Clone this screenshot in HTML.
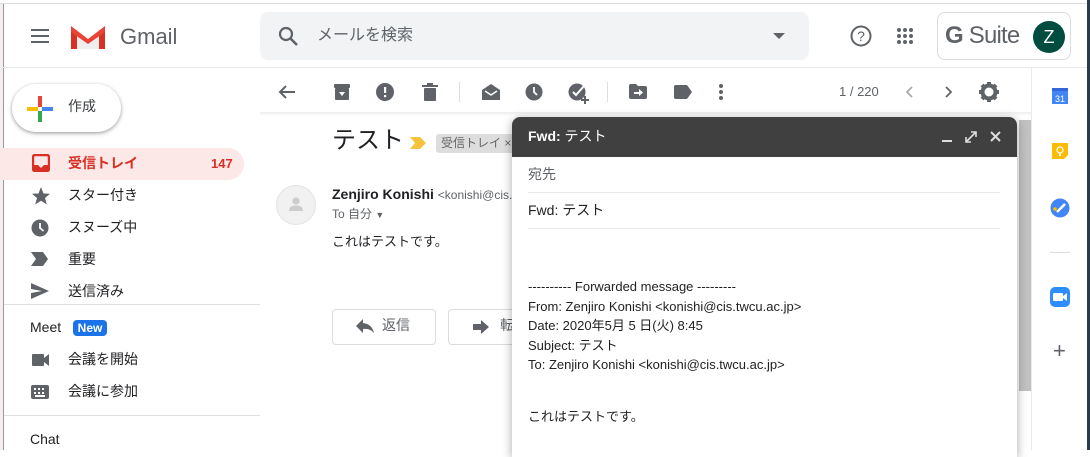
<!DOCTYPE html>
<html><head><meta charset="utf-8"><style>
*{box-sizing:border-box;margin:0;padding:0}
body{width:1090px;height:450px;overflow:hidden;background:#fff;font-family:"Liberation Sans","Noto Sans CJK JP",sans-serif;color:#202124;position:relative;line-height:1.2}
.a{position:absolute;white-space:nowrap}
.ic{position:absolute;fill:#5f6368}
.nav{position:absolute;left:68px;font-size:14px;color:#202124;white-space:nowrap}
</style></head><body>
<div class="a" style="left:0;top:0;width:1090px;height:4px;background:#fff;border-bottom:1px solid #ddd"></div>
<div class="a" style="left:0;top:4px;width:4px;height:446px;background:#f4eef0;border-right:1px solid #999"></div>
<div class="a" style="left:1087px;top:0;width:3px;height:450px;background:#2b3a4a"></div>
<!-- header -->
<svg class="ic" style="left:30px;top:27px" width="20" height="18"><rect x="1" y="2" width="18" height="2"/><rect x="1" y="8" width="18" height="2"/><rect x="1" y="14" width="18" height="2"/></svg>
<svg class="a" style="left:69px;top:23px" width="38" height="27"><path d="M2 4 L19 16 L36 4 L36 26 L2 26Z" fill="#eee"/><path d="M2 4 L2 26 L8 26 L8 10 Z" fill="#d93025"/><path d="M36 4 L36 26 L30 26 L30 10Z" fill="#d93025"/><path d="M2 3 L19 16 L36 3 L36 9 L19 21 L2 9Z" fill="#ea4335"/></svg>
<div class="a" style="left:120px;top:24px;font-size:22px;color:#5f6368">Gmail</div>
<div class="a" style="left:260px;top:12px;width:549px;height:48px;background:#f1f3f4;border-radius:8px"></div>
<svg class="ic" style="left:278px;top:26px" width="22" height="22"><circle cx="8" cy="8" r="6" fill="none" stroke="#5f6368" stroke-width="2.2"/><path d="M12 12 L19 19" stroke="#5f6368" stroke-width="2.6"/></svg>
<div class="a" style="left:317px;top:26px;font-size:16px;color:#5f6368">メールを検索</div>
<svg class="ic" style="left:773px;top:33px" width="12" height="8"><path d="M0 0 L12 0 L6 6Z"/></svg>
<svg class="a" style="left:849px;top:24px" width="24" height="24"><circle cx="12" cy="12" r="9.5" fill="none" stroke="#5f6368" stroke-width="2"/><text x="12" y="17" font-size="14" text-anchor="middle" fill="#5f6368" font-family="Liberation Sans">?</text></svg>
<svg class="ic" style="left:896px;top:27px" width="18" height="18"><g><circle cx="3" cy="3" r="2"/><circle cx="9" cy="3" r="2"/><circle cx="15" cy="3" r="2"/><circle cx="3" cy="9" r="2"/><circle cx="9" cy="9" r="2"/><circle cx="15" cy="9" r="2"/><circle cx="3" cy="15" r="2"/><circle cx="9" cy="15" r="2"/><circle cx="15" cy="15" r="2"/></g></svg>
<div class="a" style="left:937px;top:12px;width:134px;height:48px;border:1px solid #dadce0;border-radius:8px"></div>
<div class="a" style="left:945px;top:22px;font-size:24px;color:#5f6368;letter-spacing:-0.8px"><b>G</b> Suite</div>
<div class="a" style="left:1033px;top:21px;width:32px;height:32px;border-radius:50%;background:#004d40;color:#fff;font-size:18px;text-align:center;line-height:32px">Z</div>
<div class="a" style="left:0;top:67px;width:1087px;height:1px;background:#e8eaed"></div>
<!-- sidebar -->
<div class="a" style="left:12px;top:84px;width:109px;height:48px;border-radius:24px;box-shadow:0 1px 3px rgba(0,0,0,.3),0 2px 6px rgba(0,0,0,.12);background:#fff"></div>
<svg class="a" style="left:27px;top:96px" width="26" height="26"><rect x="11" y="0" width="4" height="11" fill="#ea4335"/><rect x="15" y="11" width="11" height="4" fill="#4285f4"/><rect x="11" y="15" width="4" height="11" fill="#34a853"/><rect x="0" y="11" width="11" height="4" fill="#fbbc04"/></svg>
<div class="a" style="left:68px;top:98px;font-size:14px;color:#3c4043">作成</div>
<div class="a" style="left:0;top:148px;width:244px;height:32px;background:#fce8e6;border-radius:0 16px 16px 0"></div>
<svg class="a" style="left:32px;top:154px" width="18" height="18"><rect x="1" y="1" width="16" height="16" rx="2" fill="none" stroke="#d93025" stroke-width="2.4"/><path d="M1 11 L6 11 L9 14 L12 11 L17 11 L17 17 L1 17Z" fill="#d93025"/></svg>
<div class="nav" style="top:155px;color:#d93025;font-weight:bold">受信トレイ</div>
<div class="a" style="left:211px;top:156px;font-size:13px;color:#d93025;font-weight:bold">147</div>
<svg class="ic" style="left:31px;top:186px" width="20" height="20"><path d="M10 1 L12.5 7.5 L19 7.8 L14 12 L15.8 18.5 L10 14.8 L4.2 18.5 L6 12 L1 7.8 L7.5 7.5Z"/></svg>
<div class="nav" style="top:187px">スター付き</div>
<svg class="ic" style="left:31px;top:219px" width="18" height="18"><circle cx="9" cy="9" r="8.5"/><path d="M9 4 L9 9 L12.5 12" stroke="#fff" stroke-width="1.8" fill="none"/></svg>
<div class="nav" style="top:219px">スヌーズ中</div>
<svg class="ic" style="left:31px;top:252px" width="18" height="14"><path d="M0 0 L12 0 L17 7 L12 14 L0 14 L5 7Z"/></svg>
<div class="nav" style="top:251px">重要</div>
<svg class="ic" style="left:31px;top:283px" width="18" height="16"><path d="M0 0 L18 8 L0 16 L0 10 L11 8 L0 6Z"/></svg>
<div class="nav" style="top:283px">送信済み</div>
<div class="a" style="left:4px;top:304px;width:256px;height:1px;background:#e0e0e0"></div>
<div class="a" style="left:30px;top:319px;font-size:14px;color:#202124">Meet</div>
<div class="a" style="left:73px;top:320px;width:34px;height:16px;background:#1a73e8;border-radius:4px;color:#fff;font-size:12px;font-weight:bold;text-align:center;line-height:16px">New</div>
<svg class="ic" style="left:32px;top:354px" width="18" height="12"><rect x="0" y="0" width="12" height="12" rx="1"/><path d="M12 4 L17 0 L17 12 L12 8Z"/></svg>
<div class="nav" style="top:351px">会議を開始</div>
<svg class="ic" style="left:31px;top:385px" width="18" height="14"><rect x="0" y="0" width="18" height="14" rx="2"/><g fill="#fff"><rect x="3" y="3" width="2" height="2"/><rect x="7" y="3" width="2" height="2"/><rect x="11" y="3" width="2" height="2"/><rect x="3" y="7" width="2" height="2"/><rect x="7" y="7" width="2" height="2"/><rect x="11" y="7" width="2" height="2"/><rect x="4" y="10" width="10" height="2"/></g></svg>
<div class="nav" style="top:383px">会議に参加</div>
<div class="a" style="left:4px;top:415px;width:256px;height:1px;background:#e0e0e0"></div>
<div class="a" style="left:30px;top:431px;font-size:14px">Chat</div>
<!-- toolbar -->
<svg class="a" style="left:278px;top:84px" width="18" height="16"><path d="M17 8 L2 8 M8 2 L2 8 L8 14" stroke="#5f6368" stroke-width="2" fill="none"/></svg>
<svg class="ic" style="left:333px;top:83px" width="18" height="18"><rect x="1" y="1" width="16" height="4" rx="1"/><rect x="2" y="5" width="14" height="12" rx="1"/><path d="M6 9 L12 9 L9 13Z" fill="#fff"/></svg>
<svg class="ic" style="left:376px;top:83px" width="18" height="18"><circle cx="9" cy="9" r="9"/><rect x="8" y="4" width="2.2" height="6" fill="#fff"/><rect x="8" y="12" width="2.2" height="2.2" fill="#fff"/></svg>
<svg class="ic" style="left:422px;top:83px" width="16" height="18"><rect x="0" y="2" width="16" height="2"/><rect x="5" y="0" width="6" height="2"/><rect x="2" y="5" width="12" height="13" rx="1"/></svg>
<div class="a" style="left:459px;top:82px;width:1px;height:20px;background:#ddd"></div>
<svg class="ic" style="left:481px;top:83px" width="20" height="18"><path d="M1 7 L10 1 L19 7 L19 17 L1 17Z"/><path d="M4 8 L10 12 L16 8" stroke="#fff" stroke-width="1.5" fill="none"/></svg>
<svg class="ic" style="left:525px;top:83px" width="18" height="18"><circle cx="9" cy="9" r="8.5"/><path d="M9 4 L9 9 L12 12" stroke="#fff" stroke-width="1.8" fill="none"/></svg>
<svg class="ic" style="left:568px;top:82px" width="22" height="22"><circle cx="9" cy="10" r="8.5"/><path d="M5 10 L8 13 L16 4" stroke="#fff" stroke-width="2" fill="none"/><path d="M17 14 L17 22 M13 18 L21 18" stroke="#5f6368" stroke-width="2"/></svg>
<div class="a" style="left:607px;top:82px;width:1px;height:20px;background:#ddd"></div>
<svg class="ic" style="left:629px;top:84px" width="18" height="15"><path d="M0 2 Q0 0 2 0 L7 0 L9 2 L16 2 Q18 2 18 4 L18 13 Q18 15 16 15 L2 15 Q0 15 0 13Z"/><path d="M5 8 L10 8 L10 5 L14 8.5 L10 12 L10 10 L5 10Z" fill="#fff"/></svg>
<svg class="ic" style="left:674px;top:85px" width="18" height="14"><path d="M2 0 L13 0 L18 7 L13 14 L2 14 Q0 14 0 12 L0 2 Q0 0 2 0Z"/></svg>
<svg class="ic" style="left:719px;top:84px" width="4" height="16"><circle cx="2" cy="2" r="2"/><circle cx="2" cy="8" r="2"/><circle cx="2" cy="14" r="2"/></svg>
<div class="a" style="left:839px;top:84px;font-size:13px;color:#5f6368">1 / 220</div>
<svg class="a" style="left:905px;top:86px" width="8" height="12"><path d="M7 1 L2 6 L7 11" stroke="#aaa" stroke-width="1.8" fill="none"/></svg>
<svg class="a" style="left:945px;top:86px" width="8" height="12"><path d="M1 1 L6 6 L1 11" stroke="#5f6368" stroke-width="1.8" fill="none"/></svg>
<svg class="a" style="left:979px;top:82px" width="20" height="20"><circle cx="10" cy="10" r="6.5" fill="none" stroke="#5f6368" stroke-width="4"/><g stroke="#5f6368" stroke-width="4"><path d="M10 0 V20 M0 10 H20 M3 3 L17 17 M17 3 L3 17" stroke-dasharray="3 14"/></g><circle cx="10" cy="10" r="2.6" fill="#fff"/></svg>
<div class="a" style="left:260px;top:112px;width:771px;height:4px;background:linear-gradient(#eee,#fff)"></div>
<!-- message -->
<div class="a" style="left:332px;top:127px;font-size:24px;color:#202124">テスト</div>
<svg class="a" style="left:410px;top:137px" width="16" height="12"><path d="M0 0 L10 0 L16 6 L10 12 L0 12 L5 6Z" fill="#f5c33b"/></svg>
<div class="a" style="left:436px;top:134px;width:80px;height:19px;background:#ddd;border-radius:3px;font-size:12px;color:#666;padding:2px 5px">受信トレイ ×</div>
<div class="a" style="left:276px;top:185px;width:40px;height:40px;border-radius:50%;background:#f1f1f1;border:1px solid #e4e4e4"></div>
<svg class="a" style="left:288px;top:196px" width="16" height="16"><circle cx="8" cy="5" r="3.6" fill="#ccc"/><path d="M1 15 Q1 9.5 8 9.5 Q15 9.5 15 15Z" fill="#ccc"/></svg>
<div class="a" style="left:332px;top:186px;font-size:14px;font-weight:bold">Zenjiro Konishi <span style="font-weight:normal;font-size:12px;color:#5f6368">&lt;konishi@cis.t</span></div>
<div class="a" style="left:332px;top:207px;font-size:12px;color:#5f6368">To 自分 <span style="font-size:9px">▼</span></div>
<div class="a" style="left:332px;top:234px;font-size:13px">これはテストです。</div>
<div class="a" style="left:332px;top:309px;width:104px;height:36px;border:1px solid #dadce0;border-radius:4px"></div>
<svg class="ic" style="left:356px;top:319px" width="18" height="14"><path d="M7 0 L0 7 L7 14 L7 10 Q14 9 18 14 Q16 5 7 4Z"/></svg>
<div class="a" style="left:382px;top:317px;font-size:14px;color:#5f6368">返信</div>
<div class="a" style="left:448px;top:309px;width:70px;height:36px;border:1px solid #dadce0;border-right:none;border-radius:4px 0 0 4px"></div>
<svg class="ic" style="left:473px;top:320px" width="16" height="14"><path d="M0 4 L8 4 L8 0 L16 7 L8 14 L8 10 L0 10Z"/></svg>
<div class="a" style="left:500px;top:317px;font-size:14px;color:#5f6368">転</div>
<!-- scrollbar & right panel -->
<div class="a" style="left:1019px;top:120px;width:12px;height:271px;background:#c1c1c1"></div>
<div class="a" style="left:1031px;top:68px;width:1px;height:382px;background:#e8eaed"></div>
<svg class="a" style="left:1052px;top:87px" width="18" height="18"><rect x="0" y="1" width="16" height="16" fill="#4285f4"/><rect x="0" y="1" width="16" height="3" fill="#3367d6"/><text x="8" y="15" font-size="9" fill="#fff" text-anchor="middle" font-family="Liberation Sans">31</text></svg>
<svg class="a" style="left:1052px;top:143px" width="18" height="18"><path d="M0 0 H16 V12 L12 16 H0Z" fill="#fbbc04"/><circle cx="8" cy="7" r="3" fill="none" stroke="#fff" stroke-width="1.2"/><rect x="7" y="10" width="2" height="3" fill="#fff"/></svg>
<svg class="a" style="left:1050px;top:198px" width="20" height="20"><circle cx="10" cy="10" r="9.5" fill="#4285f4"/><path d="M7 14 L15 6" stroke="#fff" stroke-width="2.5"/><circle cx="5" cy="11" r="1.8" fill="#fbbc04"/></svg>
<div class="a" style="left:1050px;top:252px;width:20px;height:1px;background:#ddd"></div>
<svg class="a" style="left:1050px;top:287px" width="20" height="20"><rect width="20" height="20" rx="5" fill="#2d8cff"/><rect x="3" y="6" width="10" height="8" rx="1" fill="#fff"/><path d="M13 9 L17 6 L17 14 L13 11Z" fill="#fff"/></svg>
<div class="a" style="left:1053px;top:340px;font-size:22px;color:#5f6368;line-height:22px">+</div>
<!-- compose -->
<div class="a" style="left:512px;top:117px;width:505px;height:340px;background:#fff;border-radius:8px 8px 0 0;box-shadow:0 2px 10px rgba(0,0,0,.35)"></div>
<div class="a" style="left:512px;top:117px;width:505px;height:40px;background:#404040;border-radius:8px 8px 0 0"></div>
<div class="a" style="left:528px;top:128px;font-size:14px;color:#fff"><b>Fwd:</b> テスト</div>
<div class="a" style="left:942px;top:140px;width:10px;height:2px;background:#ddd"></div>
<svg class="a" style="left:965px;top:131px" width="12" height="12"><path d="M1 11 L11 1 M6 1 L11 1 L11 6 M1 6 L1 11 L6 11" stroke="#ddd" stroke-width="1.6" fill="none"/></svg>
<svg class="a" style="left:990px;top:131px" width="11" height="11"><path d="M1 1 L10 10 M10 1 L1 10" stroke="#ddd" stroke-width="2"/></svg>
<div class="a" style="left:528px;top:166px;font-size:14px;color:#5f6368">宛先</div>
<div class="a" style="left:528px;top:192px;width:472px;height:1px;background:#e8eaed"></div>
<div class="a" style="left:528px;top:202px;font-size:14px">Fwd: テスト</div>
<div class="a" style="left:528px;top:228px;width:472px;height:1px;background:#e8eaed"></div>
<div class="a" style="left:528px;top:277px;font-size:13px;line-height:19.5px;color:#222">---------- Forwarded message ---------<br>From: Zenjiro Konishi &lt;konishi@cis.twcu.ac.jp&gt;<br>Date: 2020年5月 5 日(火) 8:45<br>Subject: テスト<br>To: Zenjiro Konishi &lt;konishi@cis.twcu.ac.jp&gt;</div>
<div class="a" style="left:528px;top:409px;font-size:13px;color:#222">これはテストです。</div>
</body></html>
